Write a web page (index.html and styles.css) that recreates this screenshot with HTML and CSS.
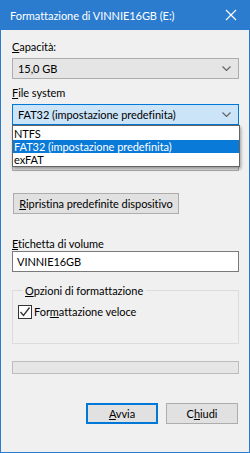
FILE: index.html
```html
<!DOCTYPE html>
<html lang="it">
<head>
<meta charset="utf-8">
<title>Formattazione</title>
<link rel="stylesheet" href="styles.css">
</head>
<body>
<div class="window">
  <div class="titlebar">
    <span class="title">Formattazione di VINNIE16GB (E:)</span>
    <svg class="close" width="12" height="12" viewBox="0 0 12 12"><path d="M1 1 L11 11 M11 1 L1 11" stroke="#fff" stroke-width="1.2" fill="none"/></svg>
  </div>
  <div class="content">
    <div class="label"><u>C</u>apacità:</div>
    <div class="combo">
      <span>15,0 GB</span>
      <svg class="chev" width="9" height="5" viewBox="0 0 9 5"><path d="M0.5 0.5 L4.5 4.5 L8.5 0.5" stroke="#606060" stroke-width="1.1" fill="none"/></svg>
    </div>
    <div class="label lbl-fs"><u>F</u>ile system</div>
    <div class="fs-wrap">
      <div class="combo focus">
        <span>FAT32 (impostazione predefinita)</span>
        <svg class="chev" width="9" height="5" viewBox="0 0 9 5"><path d="M0.5 0.5 L4.5 4.5 L8.5 0.5" stroke="#606060" stroke-width="1.1" fill="none"/></svg>
      </div>
      <ul class="droplist">
        <li>NTFS</li>
        <li class="sel">FAT32 (impostazione predefinita)</li>
        <li>exFAT</li>
      </ul>
    </div>
    <div class="label lbl-alloc"></div>
    <div class="combo hidden-combo"></div>
    <button class="btn reset"><u>R</u>ipristina predefinite dispositivo</button>
    <div class="label lbl-vol"><u>E</u>tichetta di volume</div>
    <div class="input">VINNIE16GB</div>
    <div class="group">
      <div class="legend"><u>O</u>pzioni di formattazione</div>
      <div class="check-row">
        <span class="checkbox"><svg width="12" height="12" viewBox="0 0 12 12"><path d="M1.5 6 L4.5 9.5 L10.5 1.5" stroke="#333" stroke-width="1.3" fill="none"/></svg></span>
        <span>For<u>m</u>attazione veloce</span>
      </div>
    </div>
    <div class="progress"></div>
    <div class="actions">
      <button class="btn primary"><u>A</u>vvia</button>
      <button class="btn">C<u>h</u>iudi</button>
    </div>
  </div>
</div>
</body>
</html>
```
FILE: styles.css
```css
* { box-sizing: border-box; }
html, body { margin: 0; padding: 0; }
body {
  font-family: Lato, "Liberation Sans", Arial, sans-serif;
  font-size: 11px;
  letter-spacing: -0.05px;
  color: #000;
  background: #f0f0f0;
}
.window {
  width: 250px;
  height: 453px;
  background: #f0f0f0;
  border: 1px solid #2b7bcf;
  border-top: none;
  overflow: hidden;
}
.titlebar {
  height: 30px;
  margin: 0 -1px;
  background: #2b7bcf;
  color: #fff;
  display: flex;
  align-items: center;
  justify-content: space-between;
  padding: 0 13px 0 10px;
}
.title { font-size: 11px; }
.close { display: block; }
.content {
  padding: 9px 10px 0 11px;
}
u { text-decoration: underline; text-underline-offset: 1px; }
.label {
  line-height: 15px;
  height: 15px;
  white-space: nowrap;
}
.combo {
  margin-top: 4px;
  height: 21px;
  border: 1px solid #adadad;
  background: #e5e5e5;
  display: flex;
  align-items: center;
  justify-content: space-between;
  padding: 0 7px 0 5px;
  line-height: 19px;
  white-space: nowrap;
}
.combo.focus {
  background: #cce4f7;
  border-color: #0078d7;
}
.chev { display: block; }
.lbl-fs { margin-top: 6px; }
.fs-wrap { position: relative; }
.droplist {
  position: absolute;
  left: 0;
  right: -1px;
  top: 21px;
  margin: 0;
  padding: 1px 0 0;
  list-style: none;
  background: #fff;
  border: 1px solid #646464;
  box-shadow: 1px 2px 3px rgba(0,0,0,0.35);
  z-index: 2;
}
.droplist li {
  height: 13px;
  line-height: 13px;
  padding-left: 1px;
  white-space: nowrap;
}
.droplist li.sel {
  background: #0a7ad9;
  color: #fff;
}
.lbl-alloc { margin-top: 6px; }
.btn {
  font-family: inherit;
  font-size: 11px;
  letter-spacing: -0.05px;
  color: #000;
  background: #e1e1e1;
  border: 1px solid #adadad;
  height: 21px;
  padding: 0;
  margin: 0;
  line-height: 19px;
  white-space: nowrap;
}
.reset {
  display: block;
  margin-top: 22px;
  margin-left: 1px;
  width: 166px;
}
.lbl-vol { margin-top: 22px; }
.input {
  height: 21px;
  border: 1px solid #7a7a7a;
  background: #fff;
  padding-left: 4px;
  line-height: 19px;
}
.group {
  margin-top: 18px;
  border: 1px solid #dcdcdc;
  height: 54px;
  padding: 0 5px;
}
.legend {
  margin: -8px 0 0 5px;
  padding: 0 3px 0 2px;
  width: fit-content;
  background: #f0f0f0;
  line-height: 15px;
  white-space: nowrap;
}
.check-row {
  margin-top: 6px;
  display: flex;
  align-items: center;
  gap: 2px;
  line-height: 15px;
}
.checkbox {
  width: 14px;
  height: 14px;
  border: 1px solid #333;
  background: #fff;
  display: flex;
  align-items: center;
  justify-content: center;
}
.checkbox svg { display: block; }
.progress {
  margin-top: 17px;
  height: 13px;
  border: 1px solid #bcbcbc;
  background: #e6e6e6;
}
.actions {
  margin-top: 29px;
  display: flex;
  justify-content: flex-end;
  gap: 8px;
  padding-right: 1px;
}
.actions .btn { width: 72px; }
.actions .primary {
  border: 2px solid #0078d7;
  line-height: 17px;
}
```
